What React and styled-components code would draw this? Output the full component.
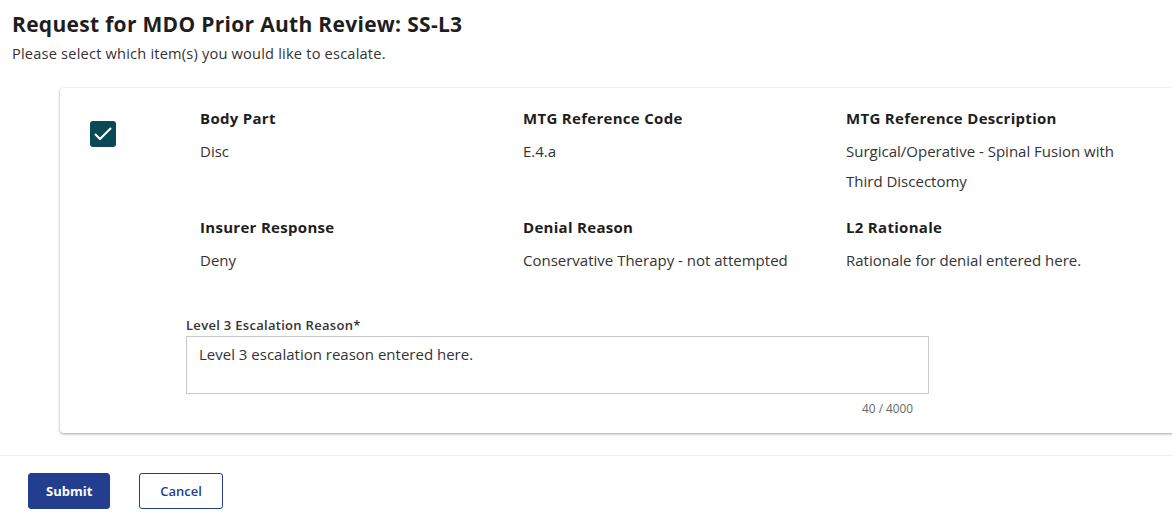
import styled, { createGlobalStyle } from 'styled-components';

const GlobalStyle = createGlobalStyle`
  body {
    margin: 0;
    background: #ffffff;
    font-family: 'Open Sans', 'Liberation Sans', sans-serif;
    color: #222;
    overflow: hidden;
  }
`;

const Page = styled.div`
  width: 1172px;
  height: 532px;
  overflow: hidden;
`;

const Header = styled.div`
  padding: 10px 12px 0;
`;

const Title = styled.h1`
  margin: 0;
  font-size: 21px;
  font-weight: 700;
  line-height: 28px;
  letter-spacing: 0.3px;
  color: #1e1e1e;
`;

const Subtitle = styled.p`
  margin: 6px 0 0;
  font-size: 14.6px;
  line-height: 18px;
  letter-spacing: 0.2px;
  color: #333;
`;

const Card = styled.div`
  margin: 26px 0 0 60px;
  width: 1160px;
  padding: 19px 0 18px;
  background: #fff;
  border-radius: 4px;
  box-shadow: 0 1px 3px rgba(0, 0, 0, 0.35), 0 0 1px rgba(0, 0, 0, 0.08);
  display: flex;
  flex-direction: column;
`;

const ItemRow = styled.div`
  display: flex;
  align-items: flex-start;
`;

const CheckCell = styled.div`
  width: 140px;
  padding: 14px 0 0 30px;
  box-sizing: border-box;
`;

const CheckBox = styled.div`
  width: 26px;
  height: 26px;
  border-radius: 3px;
  background: #0b4855;
  display: flex;
  align-items: center;
  justify-content: center;
`;

const FieldGrid = styled.div`
  display: grid;
  grid-template-columns: 323px 323px 323px;
  row-gap: 20px;
`;

const Field = styled.div`
  display: flex;
  flex-direction: column;
`;

const FieldLabel = styled.div`
  font-size: 15px;
  font-weight: 700;
  line-height: 22px;
  letter-spacing: 0.3px;
  color: #1e1e1e;
  margin-bottom: 7px;
`;

const FieldValue = styled.div`
  font-size: 15px;
  line-height: 30px;
  color: #333;
  max-width: 290px;
`;

const ReasonBlock = styled.div`
  margin: 42px 0 0 126px;
  width: 743px;
  display: flex;
  flex-direction: column;
`;

const ReasonLabel = styled.label`
  font-size: 13px;
  font-weight: 600;
  line-height: 16px;
  letter-spacing: 0.3px;
  color: #333;
  margin-bottom: 3px;
`;

const ReasonBox = styled.div`
  height: 58px;
  box-sizing: border-box;
  border: 1px solid #c8c8c8;
  padding: 7px 12px;
  font-size: 15px;
  line-height: 20px;
  color: #333;
`;

const Counter = styled.div`
  align-self: flex-end;
  margin: 7px 16px 0 0;
  font-size: 11.8px;
  line-height: 14px;
  color: #666;
`;

const Divider = styled.hr`
  margin: 22px 0 0;
  border: 0;
  border-top: 1px solid #eeeeee;
`;

const Actions = styled.div`
  display: flex;
  gap: 29px;
  padding: 17px 28px 0;
`;

const Button = styled.button`
  height: 36px;
  padding: 0 ${(p) => (p.$primary ? '17px' : '20px')};
  border-radius: 3px;
  border: 1px solid #233e8e;
  background: ${(p) => (p.$primary ? '#233e8e' : '#fff')};
  color: ${(p) => (p.$primary ? '#fff' : '#233e8e')};
  font-family: inherit;
  font-size: 13px;
  font-weight: ${(p) => (p.$primary ? 700 : 600)};
  cursor: pointer;
`;

const fields = [
  { label: 'Body Part', value: 'Disc' },
  { label: 'MTG Reference Code', value: 'E.4.a' },
  { label: 'MTG Reference Description', value: 'Surgical/Operative - Spinal Fusion with Third Discectomy' },
  { label: 'Insurer Response', value: 'Deny' },
  { label: 'Denial Reason', value: 'Conservative Therapy - not attempted' },
  { label: 'L2 Rationale', value: 'Rationale for denial entered here.' },
];

export default function App() {
  const reason = 'Level 3 escalation reason entered here.';
  return (
    <Page>
      <GlobalStyle />
      <Header>
        <Title>Request for MDO Prior Auth Review: SS-L3</Title>
        <Subtitle>Please select which item(s) you would like to escalate.</Subtitle>
      </Header>
      <Card>
        <ItemRow>
          <CheckCell>
            <CheckBox>
              <svg width="24" height="24" viewBox="0 0 24 24" fill="none" stroke="#fff" strokeWidth="2" strokeLinecap="round" strokeLinejoin="round">
                <path d="M4.5 12.5l4.5 4.5L19.5 6.5" />
              </svg>
            </CheckBox>
          </CheckCell>
          <FieldGrid>
            {fields.map((f) => (
              <Field key={f.label}>
                <FieldLabel>{f.label}</FieldLabel>
                <FieldValue>{f.value}</FieldValue>
              </Field>
            ))}
          </FieldGrid>
        </ItemRow>
        <ReasonBlock>
          <ReasonLabel>Level 3 Escalation Reason*</ReasonLabel>
          <ReasonBox>{reason}</ReasonBox>
          <Counter>{reason.length + 1} / 4000</Counter>
        </ReasonBlock>
      </Card>
      <Divider />
      <Actions>
        <Button $primary>Submit</Button>
        <Button>Cancel</Button>
      </Actions>
    </Page>
  );
}
